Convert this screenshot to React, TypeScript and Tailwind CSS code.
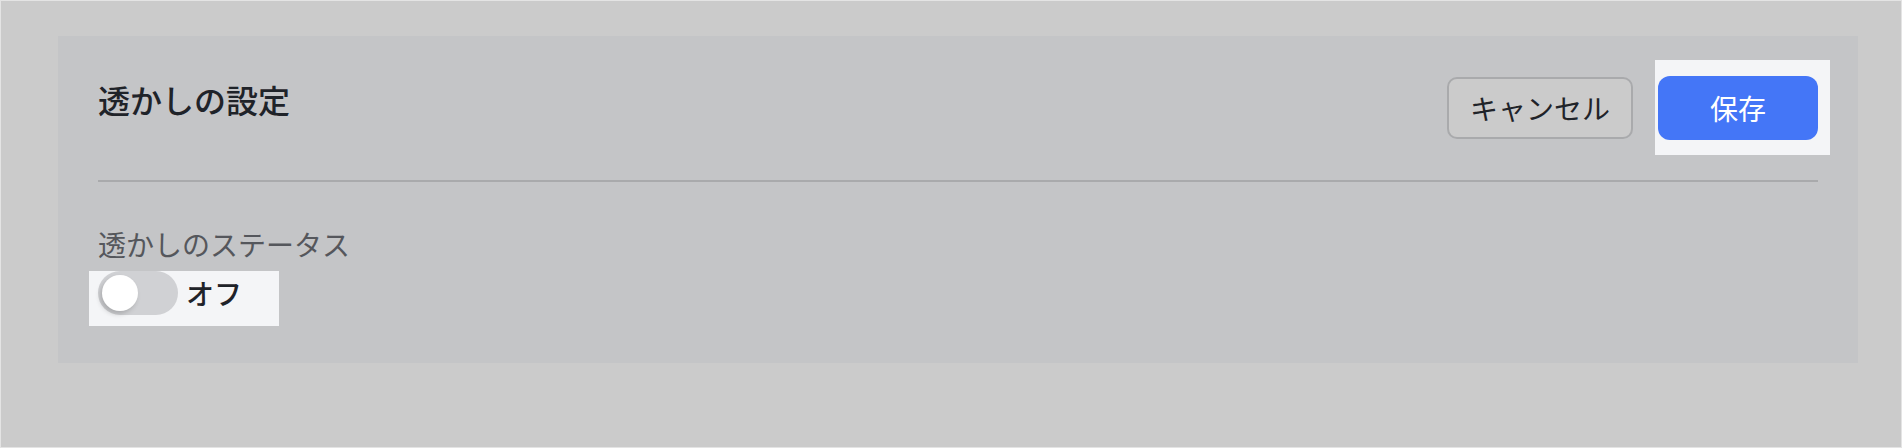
import { useState } from 'react';

const font = "font-['Noto_Sans_CJK_JP','Noto_Sans',sans-serif]";

function Spotlight({ className }: { className: string }) {
  // light patch that sits behind a highlighted control
  return <span className={`absolute bg-[#f4f5f7] ${className}`} />;
}

export default function App() {
  const [enabled, setEnabled] = useState(false);

  return (
    <div className={`h-[448px] w-full border border-[#e4e4e4] bg-[#cbcbcb] pl-[57px] pt-[35px] ${font}`}>
      <div className="w-[1800px] bg-[#c4c5c7] px-10 pt-10 pb-[37px]">
        <div className="flex items-start justify-between">
          <h2 className="text-[32px] leading-[46px] font-medium text-[#1f2329]">透かしの設定</h2>
          <div className="flex items-center gap-[25px]">
            <button className="h-[62px] w-[186px] rounded-[10px] border-2 border-[#a9aaac] bg-[#cbcbcb] text-[28px] text-[#1f2329]">
              キャンセル
            </button>
            <div className="relative">
              <Spotlight className="-left-[3px] -right-[12px] -top-4 -bottom-[15px]" />
              <button className="relative h-16 w-40 rounded-xl bg-[#4476f7] text-[28px] text-white">
                保存
              </button>
            </div>
          </div>
        </div>

        <div className="mt-10 h-[2px] bg-[#a9aaac]" />

        <p className="mt-[42px] text-[28px] leading-[40px] text-[#55575c]">透かしのステータス</p>

        <div className="relative h-[55px]">
          <Spotlight className="-left-[9px] top-0 h-[55px] w-[190px]" />
          <button
            onClick={() => setEnabled(!enabled)}
            className="relative mt-[7px] flex items-center gap-2"
          >
            <span className={`flex h-11 w-20 items-center rounded-full px-1 ${enabled ? 'justify-end bg-[#4476f7]' : 'bg-[#d0d1d4]'}`}>
              <span className="h-9 w-9 rounded-full bg-white shadow-[-2px_3px_5px_rgba(0,0,0,0.18)]" />
            </span>
            <span className="text-[28px] leading-[40px] font-medium text-[#1f2329]">{enabled ? 'オン' : 'オフ'}</span>
          </button>
        </div>
      </div>
    </div>
  );
}
